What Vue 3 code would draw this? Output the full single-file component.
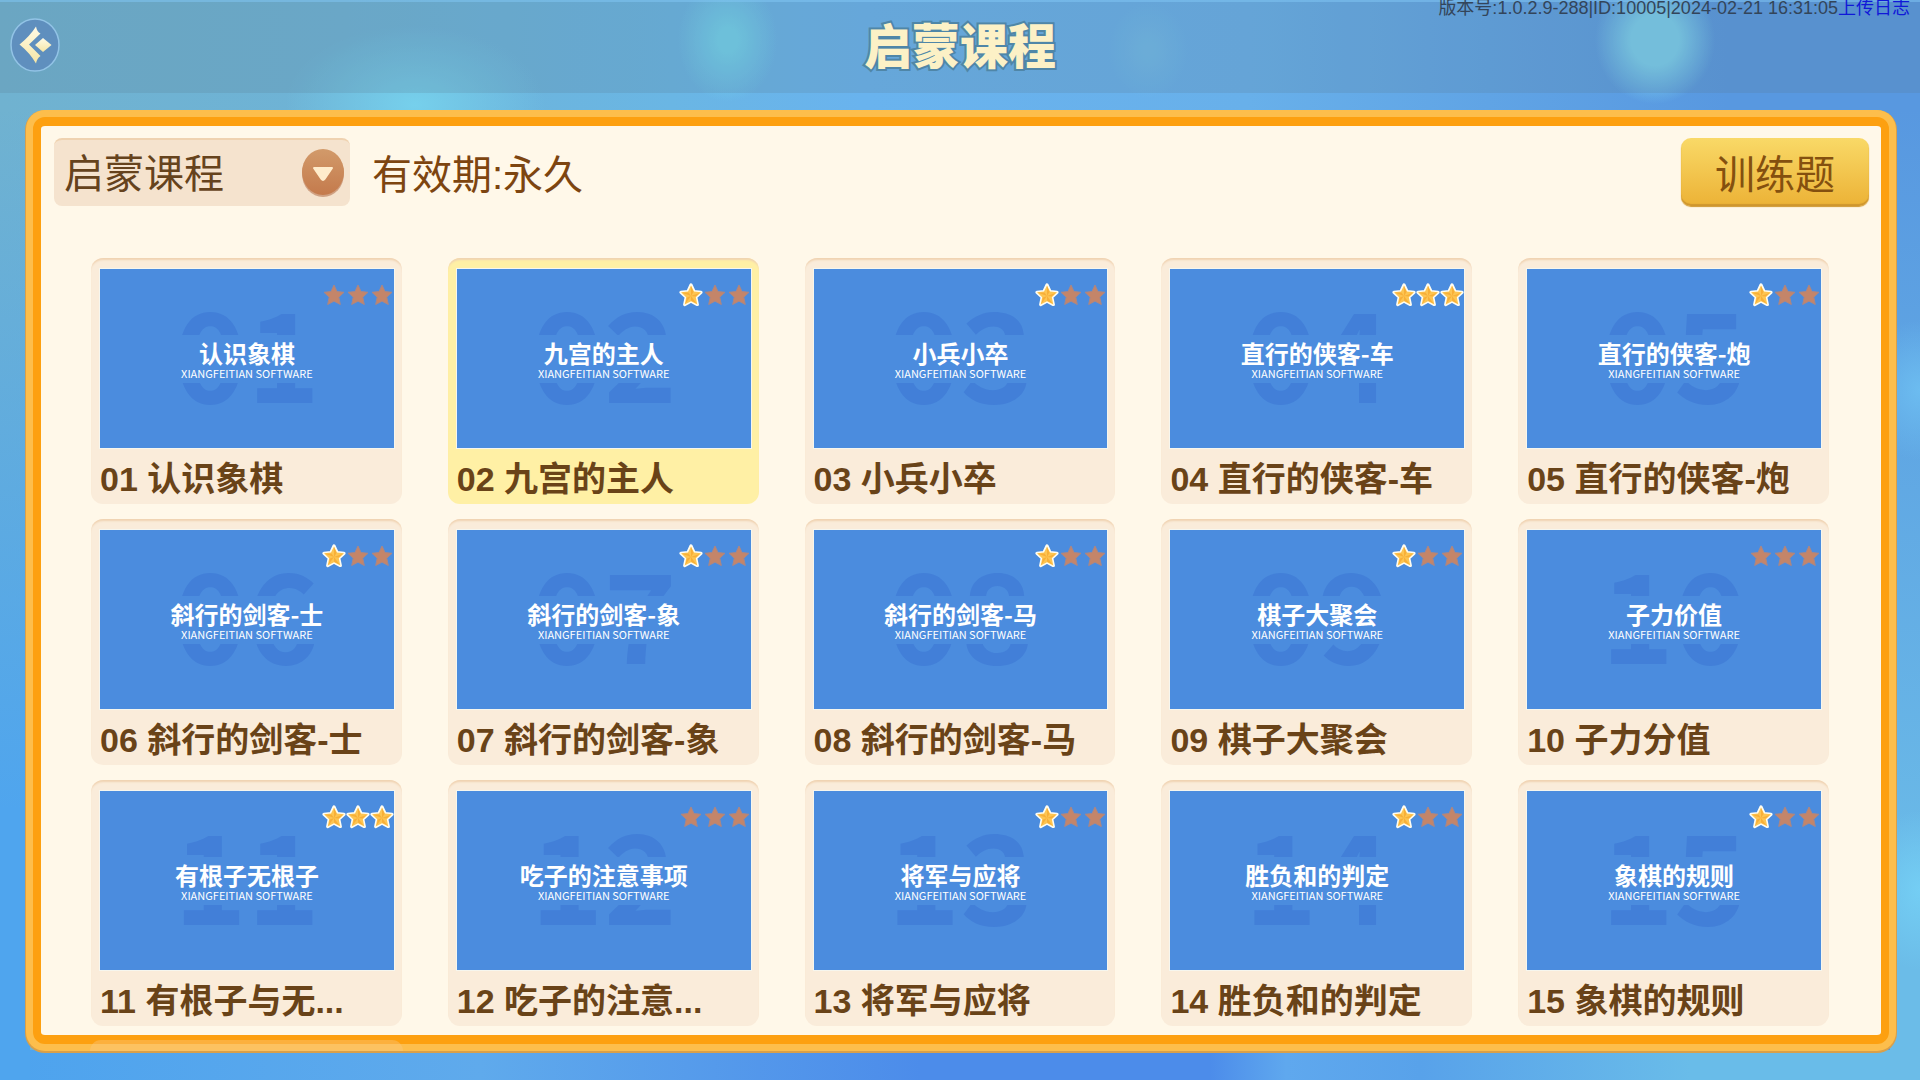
<script setup>
import { ref } from 'vue'

const course = ref('启蒙课程')
const current = ref('02')

const lessons = [
    { no: '01', name: '认识象棋', cover: '认识象棋', stars: 0 },
    { no: '02', name: '九宫的主人', cover: '九宫的主人', stars: 1 },
    { no: '03', name: '小兵小卒', cover: '小兵小卒', stars: 1 },
    { no: '04', name: '直行的侠客-车', cover: '直行的侠客-车', stars: 3 },
    { no: '05', name: '直行的侠客-炮', cover: '直行的侠客-炮', stars: 1 },
    { no: '06', name: '斜行的剑客-士', cover: '斜行的剑客-士', stars: 1 },
    { no: '07', name: '斜行的剑客-象', cover: '斜行的剑客-象', stars: 1 },
    { no: '08', name: '斜行的剑客-马', cover: '斜行的剑客-马', stars: 1 },
    { no: '09', name: '棋子大聚会', cover: '棋子大聚会', stars: 1 },
    { no: '10', name: '子力分值', cover: '子力价值', stars: 0 },
    { no: '11', name: '有根子与无...', cover: '有根子无根子', stars: 3 },
    { no: '12', name: '吃子的注意...', cover: '吃子的注意事项', stars: 0 },
    { no: '13', name: '将军与应将', cover: '将军与应将', stars: 1 },
    { no: '14', name: '胜负和的判定', cover: '胜负和的判定', stars: 1 },
    { no: '15', name: '象棋的规则', cover: '象棋的规则', stars: 1 }
]
</script>

<template>
    <div class="page">
        <header class="header">
            <button class="back" aria-label="返回">
                <svg viewBox="0 0 50 54">
                    <defs>
                        <linearGradient id="cream" x1="0" y1="0" x2="0" y2="1">
                            <stop offset="0" stop-color="#fffbe6" />
                            <stop offset="1" stop-color="#f6e6a6" />
                        </linearGradient>
                    </defs>
                    <ellipse cx="25" cy="27" rx="24" ry="26" fill="#5f8fbe" stroke="#92c3e6" stroke-width="1.5" />
                    <path d="M26 8.500Q27 14 30.500 15.500L19 26.500L30.500 38Q27 40 26 45.500Q20 35 9.500 26.500Q20 18 26 8.500Z" fill="url(#cream)" />
                    <path d="M33 20L41.500 27L33 34L25 27Z" fill="url(#cream)" />
                </svg>
            </button>
            <h1>启蒙课程</h1>
            <div class="version">
                <span>版本号:1.0.2.9-288|ID:10005|2024-02-21 16:31:05</span><a href="#">上传日志</a>
            </div>
        </header>

        <main class="panel">
            <div class="toolbar">
                <div class="picker">
                    <select v-model="course" aria-label="课程">
                        <option>启蒙课程</option>
                    </select>
                    <svg class="arrow" viewBox="0 0 42 48">
                        <defs>
                            <linearGradient id="knob" x1="0" y1="0" x2="0" y2="1">
                                <stop offset="0" stop-color="#d29a6a" />
                                <stop offset="1" stop-color="#c47a4c" />
                            </linearGradient>
                        </defs>
                        <ellipse cx="21" cy="25" rx="21" ry="23" fill="#b77450" opacity="0.6" />
                        <ellipse cx="21" cy="23" rx="21" ry="23" fill="url(#knob)" />
                        <path d="M12 19H30L22.500 30Q21 32 19.500 30Z" fill="#ffeccb" stroke="#ffeccb" stroke-width="2" stroke-linejoin="round" />
                    </svg>
                </div>
                <span class="expire">有效期:永久</span>
                <button class="train">训练题</button>
            </div>

            <div class="lessons">
                <button
                    v-for="item in lessons"
                    :key="item.no"
                    class="card"
                    :class="{ active: item.no === current }"
                    @click="current = item.no"
                >
                    <span class="cover">
                        <span class="number">{{ item.no }}</span>
                        <span class="caption">
                            <span class="caption-title">{{ item.cover }}</span>
                            <span class="caption-sub">XIANGFEITIAN SOFTWARE</span>
                        </span>
                        <span class="stars">
                            <svg v-for="n in 3" :key="n" viewBox="0 0 24 24">
                                <g v-if="n <= item.stars">
                                    <path d="M12 2L15 8.500L22 9.300L16.800 14.200L18.300 21.500L12 18.200L5.700 21.500L7.200 14.200L2 9.300L9 8.500Z" fill="#fdbd3e" stroke="#fffdf2" stroke-width="3.200" stroke-linejoin="round" />
                                    <path d="M12 2.500L15 8.500L22 9.300L16.800 14.200L18.300 21.500L12 18.200L5.700 21.500L7.200 14.200L2 9.300L9 8.500Z" fill="#fdc552" />
                                    <path d="M12 3L14.500 9L12 13ZM21 9.700L16.500 13.500L12 13ZM17.500 20.500L12 17.500V13ZM6.500 20.500L8 14.500L12 13ZM3 9.700L9.500 9.500L12 13Z" fill="#f8af38" />
                                </g>
                                <path v-else d="M12 2L15 8.500L22 9.300L16.800 14.200L18.300 21.500L12 18.200L5.700 21.500L7.200 14.200L2 9.300L9 8.500Z" fill="#c48569" stroke="#a98787" stroke-width="1" />
                            </svg>
                        </span>
                    </span>
                    <span class="name">{{ item.no }} {{ item.name }}</span>
                </button>
            </div>
            <div class="next-row"></div>
        </main>
    </div>
</template>

<style>
body {
    margin: 0;
}
</style>

<style scoped>
* {
    box-sizing: border-box;
}

.page {
    min-height: 100vh;
    display: flex;
    flex-direction: column;
    font-family: "Liberation Sans", "Noto Sans CJK SC", sans-serif;
    background:
        radial-gradient(ellipse 50px 62px at 728px 40px, #72d2ee 20%, transparent),
        radial-gradient(ellipse 40px 48px at 1148px 50px, #70baea 10%, transparent),
        radial-gradient(ellipse 60px 64px at 1655px 40px, #7bd0ef 40%, transparent),
        radial-gradient(ellipse 130px 80px at 415px 105px, #76d0ec, transparent),
        radial-gradient(ellipse 60px 70px at 100% 390px, #6cbcf0, transparent),
        radial-gradient(ellipse 60px 80px at 100% 890px, #74cef4, transparent),
        linear-gradient(to bottom, transparent 10%, #4fa5ee 75%) left / 30px 100% no-repeat,
        linear-gradient(to bottom, transparent 10%, #6bbce8 85%) right / 30px 100% no-repeat,
        linear-gradient(to right, #4da3ee, #5faaec 25%, #4c8cea 48%, #4c8cea 63%, #5fa8ee 67%, #58a2ea 74%, #69bce9 88%) bottom / 100% 30px no-repeat,
        linear-gradient(to right, #70b2d0, #6eb3d6 18%, #6ab6e4 35%, #69b3ee 45%, #68b0ea 65%, #5898e0 90%);
}

.header {
    position: relative;
    height: 93px;
    display: flex;
    align-items: center;
    padding: 0 10px 6px;
    background: rgba(90, 120, 140, 0.2);
    border-top: 2px solid rgba(130, 200, 245, 0.5);
}

.back {
    width: 50px;
    height: 54px;
    padding: 0;
    border: 0;
    background: none;
    cursor: pointer;
}

.back svg {
    display: block;
}

h1 {
    flex: 1;
    margin: 0;
    padding: 0 50px 4px 0;
    text-align: center;
    font-family: "Noto Sans CJK SC", sans-serif;
    font-size: 48px;
    font-weight: 900;
    line-height: 64px;
    color: #fcf1c6;
    -webkit-text-stroke: 4px #4f86a8;
    paint-order: stroke fill;
}

.version {
    position: absolute;
    top: -6px;
    right: 10px;
    font-size: 18px;
    line-height: 24px;
    color: #33455a;
}

.version a {
    color: #1018d8;
    text-decoration: none;
}

/* the lighter rim is drawn as a shadow outside the orange border */
.panel {
    position: relative;
    flex: 1;
    margin: 24px 31px 36px 33px;
    padding: 11px 12px 8px 13px;
    border: 8px solid #fda010;
    border-width: 9px 8px;
    border-radius: 12px;
    background: #fff8e9;
    box-shadow: 0 0 0 7px #fdbe4c, 0 1px 0 8px #d9a04a;
}

.toolbar {
    display: flex;
    align-items: center;
    height: 70px;
    color: #7d4510;
    font-size: 40px;
}

.picker {
    position: relative;
    width: 296px;
    height: 68px;
}

.picker select {
    appearance: none;
    width: 100%;
    height: 100%;
    padding: 2px 60px 0 10px;
    border: 0;
    border-top: 2px solid #efd2b0;
    border-radius: 8px;
    background: #f5e3ce;
    color: #66431d;
    font: inherit;
}

.arrow {
    position: absolute;
    right: 6px;
    top: 11px;
    width: 42px;
    height: 48px;
    pointer-events: none;
}

.expire {
    flex: 1;
    padding-left: 22px;
}

.train {
    width: 188px;
    height: 68px;
    padding: 0;
    border: 0;
    border-radius: 10px;
    background: linear-gradient(#f9d967, #ecb236);
    box-shadow: inset 0 -2px 1px #cf962e, 0 1px 1px #cf962e;
    color: #84500f;
    font: inherit;
    cursor: pointer;
}

.lessons {
    display: grid;
    grid-template-columns: repeat(5, 1fr);
    gap: 15px 46px;
    padding: 51px 40px 0 37px;
}

.card {
    display: flex;
    flex-direction: column;
    min-width: 0;
    padding: 11px 8px 0 9px;
    border: 0;
    border-radius: 12px;
    background: #faecda;
    box-shadow: inset 0 3px 2px -1px #f0d3b2;
    font: inherit;
    text-align: left;
    cursor: pointer;
}

.card.active {
    background: #fff0a5;
}

.cover {
    position: relative;
    display: grid;
    place-items: center;
    width: 100%;
    height: 179px;
    background: #4b8cde;
    box-shadow: 0 0 0 1px #f6f6ee;
}

.number,
.caption {
    grid-area: 1 / 1;
}

.number {
    padding-bottom: 19px;
    font-family: "Noto Sans CJK SC", sans-serif;
    font-size: 124px;
    font-weight: 700;
    line-height: 160px;
    color: #427fd8;
}

.caption {
    position: relative;
    width: 100%;
    height: 48px;
    padding-top: 4px;
    display: flex;
    flex-direction: column;
    align-items: center;
    background: #4b8cde;
    color: #fff;
    font-family: "Noto Sans CJK SC", sans-serif;
}

.caption-title {
    font-size: 24px;
    font-weight: 700;
    line-height: 28px;
}

.caption-sub {
    font-size: 11px;
    line-height: 12px;
}

.stars {
    position: absolute;
    top: 14px;
    right: 0;
    display: flex;
}

.stars svg {
    width: 24px;
    height: 24px;
}

.name {
    height: 56px;
    line-height: 62px;
    font-size: 34px;
    font-weight: 700;
    color: #694318;
    white-space: nowrap;
}

/* top edge of the row below, showing through the frame */
.next-row {
    position: absolute;
    left: 49px;
    bottom: -16px;
    width: 313px;
    height: 11px;
    border-radius: 12px 12px 0 0;
    background: rgba(250, 200, 130, 0.4);
}
</style>
